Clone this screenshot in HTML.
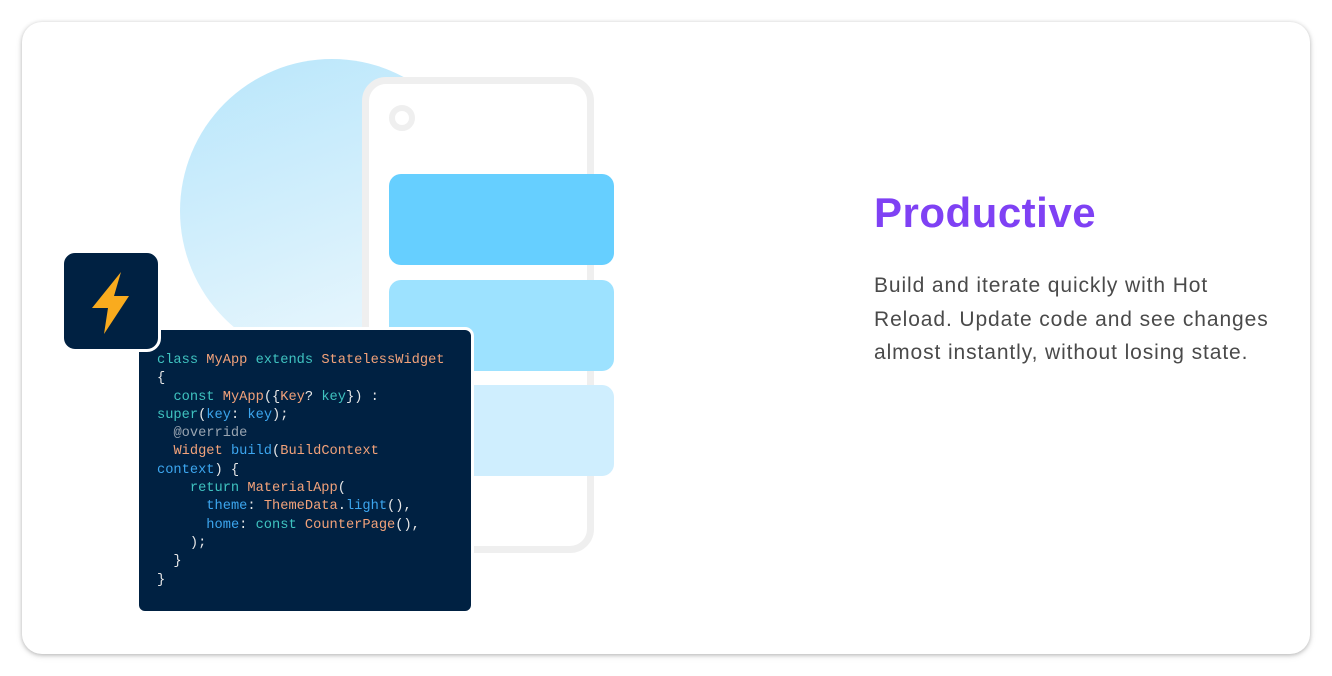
<!DOCTYPE html>
<html><head><meta charset="utf-8"><style>
html,body{margin:0;padding:0;background:#fff;width:1332px;height:676px;overflow:hidden}
.card{position:absolute;left:22px;top:22px;width:1288px;height:632px;border-radius:20px;background:#fff;box-shadow:0 1px 4px rgba(0,0,0,.25),0 2px 8px rgba(0,0,0,.08);overflow:hidden}
.abs{position:absolute}
.circle{left:158px;top:37px;width:304px;height:304px;border-radius:50%;background:linear-gradient(160deg,#b8e6fb 0%,#d6f0fc 55%,#f0f9fe 100%)}
.phone{left:340px;top:55px;width:218px;height:462px;border:7px solid #efefef;border-radius:24px;background:#fff}
.cam{left:367px;top:83px;width:14px;height:14px;border:6px solid #efefef;border-radius:50%}
.blk{left:367px;width:225px;height:91px;border-radius:12px}
.icon{left:39px;top:228px;width:94px;height:96px;background:#002142;border-radius:14px;border:3px solid #fff}
.code{left:117px;top:308px;width:332px;height:281px;background:#002142;border-radius:6px;box-shadow:0 0 0 3px #fff}
pre{margin:0;position:absolute;left:18px;top:22px;font-family:"Liberation Mono",monospace;font-size:13.7px;line-height:18.3px;color:#e8e8e8}
.k{color:#3fc3c0}.t{color:#f2a27a}.b{color:#3ca6ef}.c{color:#9aa5b1}
h1{position:absolute;left:852px;top:167px;margin:0;font-family:"Liberation Sans",sans-serif;font-weight:bold;font-size:42px;color:#7f41f4;letter-spacing:0.5px}
p{position:absolute;left:852px;top:247px;margin:0;width:440px;white-space:nowrap;font-family:"Liberation Sans",sans-serif;font-size:21px;letter-spacing:0.9px;line-height:33.5px;color:#4a4a4a}
</style></head><body>
<div class="card">
<div class="abs circle"></div>
<div class="abs phone"></div>
<div class="abs cam"></div>
<div class="abs blk" style="top:152px;background:#66cfff"></div>
<div class="abs blk" style="top:258px;background:#9de2ff"></div>
<div class="abs blk" style="top:363px;background:#cfeefe"></div>
<div class="abs code"><pre><span class="k">class</span> <span class="t">MyApp</span> <span class="k">extends</span> <span class="t">StatelessWidget</span>
{
  <span class="k">const</span> <span class="t">MyApp</span>({<span class="t">Key</span>? <span class="k">key</span>}) :
<span class="k">super</span>(<span class="b">key</span>: <span class="b">key</span>);
  <span class="c">@override</span>
  <span class="t">Widget</span> <span class="b">build</span>(<span class="t">BuildContext</span>
<span class="b">context</span>) {
    <span class="k">return</span> <span class="t">MaterialApp</span>(
      <span class="b">theme</span>: <span class="t">ThemeData</span>.<span class="b">light</span>(),
      <span class="b">home</span>: <span class="k">const</span> <span class="t">CounterPage</span>(),
    );
  }
}</pre></div>
<div class="abs icon"><svg width="94" height="96" viewBox="0 0 94 96"><path d="M57 19 L28 55 L44 55 L40 81 L65 43 L50 43 Z" fill="#f9ab1e"/></svg></div>
<h1>Productive</h1>
<p>Build and iterate quickly with Hot<br>Reload. Update code and see changes<br>almost instantly, without losing state.</p>
</div>
</body></html>
